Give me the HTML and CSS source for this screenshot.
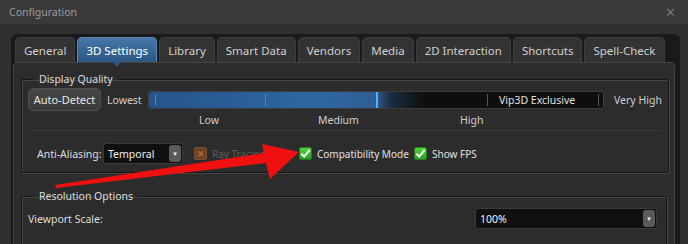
FILE: index.html
```html
<!DOCTYPE html>
<html lang="en">
<head>
  <meta charset="UTF-8" />
  <title>Configuration</title>
  <link rel="stylesheet" href="styles.css">
</head>
<body>
  <div class="titlebar">
    <span>Configuration</span>
    <span class="close">✕</span>
  </div>

  <div class="window">
    <div class="tabframe">
      <div class="tabs">
        <div class="tab">General</div>
        <div class="tab active">3D Settings</div>
        <div class="tab">Library</div>
        <div class="tab">Smart Data</div>
        <div class="tab">Vendors</div>
        <div class="tab">Media</div>
        <div class="tab">2D Interaction</div>
        <div class="tab">Shortcuts</div>
        <div class="tab">Spell-Check</div>
      </div>

      <div class="panel">
        <fieldset class="group quality">
          <legend>Display Quality</legend>

          <div class="quality-row">
            <button class="btn">Auto-Detect</button>
            <span class="edge-label lowest">Lowest</span>
            <div class="slider">
              <div class="slider-fill"></div>
              <span class="tick t1"></span>
              <span class="tick t2"></span>
              <span class="tick t3"></span>
              <span class="tick t4"></span>
              <span class="marker"></span>
              <span class="vip">Vip3D Exclusive</span>
            </div>
            <span class="edge-label highest">Very High</span>
          </div>

          <div class="level-labels">
            <span>Low</span>
            <span>Medium</span>
            <span>High</span>
          </div>

          <div class="options-row">
            <span class="label aa">Anti-Aliasing:</span>
            <div class="select small">
              <span>Temporal</span>
              <span class="drop">▼</span>
            </div>
            <span class="check disabled ray"><span class="box off">✕</span>Ray Tracing</span>
            <span class="check compat">
              <span class="box on"><svg width="11" height="11" viewBox="0 0 11 11"><path d="M1.5 5.8 L4.2 8.6 L9.6 2" fill="none" stroke="#fff" stroke-width="2"/></svg></span>Compatibility Mode
            </span>
            <span class="check">
              <span class="box on"><svg width="11" height="11" viewBox="0 0 11 11"><path d="M1.5 5.8 L4.2 8.6 L9.6 2" fill="none" stroke="#fff" stroke-width="2"/></svg></span>Show FPS
            </span>
          </div>
        </fieldset>

        <fieldset class="group resolution">
          <legend>Resolution Options</legend>
          <div class="res-row">
            <span class="label">Viewport Scale:</span>
            <div class="select wide">
              <span>100%</span>
              <span class="drop">▼</span>
            </div>
          </div>
        </fieldset>
      </div>
    </div>
  </div>

  <!-- red annotation arrow drawn over the dialog -->
  <svg class="arrow" width="688" height="244" viewBox="0 0 688 244">
    <polygon points="55,185 264,153 262,144 299,152 270,179 266,163 56,188" fill="#f01010"/>
  </svg>
</body>
</html>
```

FILE: styles.css
```css
* {
  box-sizing: border-box;
  margin: 0;
  padding: 0;
}

body {
  width: 688px;
  height: 244px;
  overflow: hidden;
  background-color: #303030;
  color: #dcdcdc;
  font-family: "Noto Sans", "Open Sans", sans-serif;
  font-size: 10.5px;
  position: relative;
}

.titlebar {
  height: 24px;
  background-color: #3a3a3a;
  color: #9a9a9a;
  font-size: 10.5px;
  display: flex;
  align-items: center;
  justify-content: space-between;
  padding: 0 12px 0 9px;
}

.titlebar .close {
  color: #777;
  font-size: 13px;
}

.window {
  padding: 10px 0 0 11px;
}

.tabframe {
  width: 669px;
  background-color: #1a1a1a;
  border-radius: 6px 6px 0 0;
  padding: 3px 3px 0 2px;
  height: 210px;
}

.tabs {
  display: flex;
  gap: 2px;
  padding-left: 2px;
}

.tab {
  height: 25px;
  padding: 0 8px;
  display: flex;
  align-items: center;
  background-color: #333;
  border: 1px solid #3e3e3e;
  border-bottom: none;
  border-radius: 5px 5px 0 0;
  color: #cfcfcf;
  font-size: 11.5px;
  position: relative;
}

.tab.active {
  background: linear-gradient(#4677a8, #2a5683);
  border-color: #5a88b6;
  color: #fff;
}

.tab.active::after {
  content: "";
  position: absolute;
  left: 50%;
  bottom: -5px;
  margin-left: -4px;
  border-left: 4px solid transparent;
  border-right: 4px solid transparent;
  border-top: 5px solid #2a5683;
}

.panel {
  width: 662px;
  height: 185px;
  background-color: #2c2c2c;
  border: 1px solid #454545;
  border-radius: 4px 4px 0 0;
  padding: 10px 7px 0 7px;
}

.group {
  border: 1px solid #171717;
  box-shadow: inset 1px 1px 0 #454545, 1px 1px 0 #454545;
  padding: 0 6px;
}

.group legend {
  margin-left: 6px;
  padding: 0 5px;
  color: #dcdcdc;
  font-size: 10.5px;
  line-height: 12px;
}

.quality {
  height: 100px;
}

.quality-row {
  display: flex;
  align-items: center;
  margin-top: 3px;
  white-space: nowrap;
}

.quality-row > * {
  flex-shrink: 0;
}

.btn {
  width: 73px;
  height: 23px;
  background: linear-gradient(#474747, #3b3b3b);
  border: 1px solid #505050;
  border-radius: 5px;
  color: #e6e6e6;
  font-family: inherit;
  font-size: 11px;
}

.edge-label {
  color: #cfcfcf;
}

.lowest {
  width: 47px;
  padding-left: 6px;
}

.highest {
  padding-left: 10px;
}

.slider {
  position: relative;
  width: 456px;
  height: 18px;
  background-color: #0e0e0e;
  border: 1px solid #3e3e3e;
  border-radius: 3px;
  overflow: hidden;
}

.slider-fill {
  height: 100%;
  width: 275px;
  background: linear-gradient(90deg, #24558a 0%, #2f66a0 60%, #2d5f94 82%, #1a2d42 88%, #0e0e0e 100%);
}

.tick {
  position: absolute;
  top: 2px;
  width: 1px;
  height: 12px;
  background-color: #6a7d92;
}

.t1 { left: 6px; }
.t2 { left: 116px; }
.t3 { left: 338px; background-color: #555; }
.t4 { left: 449px; background-color: #555; }

.marker {
  position: absolute;
  top: 0;
  left: 227px;
  width: 2px;
  height: 100%;
  background-color: #4cb4ff;
}

.vip {
  position: absolute;
  left: 350px;
  top: 0;
  line-height: 16px;
  color: #e0e0e0;
}

.level-labels {
  display: grid;
  grid-template-columns: 171px 119px 142px auto;
  margin-top: 2px;
  color: #cfcfcf;
}

.level-labels span:first-child {
  grid-column: 2;
}

.options-row {
  display: flex;
  align-items: center;
  border-top: 1px solid #3a3a3a;
  margin-top: 3px;
  padding: 12px 0 0 9px;
  white-space: nowrap;
}

.label {
  color: #dcdcdc;
}

.label.aa {
  width: 66px;
}

.select {
  display: flex;
  align-items: center;
  justify-content: space-between;
  background-color: #101010;
  border: 1px solid #3a3a3a;
  border-radius: 3px;
  color: #f0f0f0;
  padding: 0 1px 0 4px;
}

.select.small {
  width: 80px;
  height: 21px;
}

.select .drop {
  width: 12px;
  height: 17px;
  background-color: #5a5a5a;
  border-radius: 3px;
  color: #eee;
  font-size: 6px;
  display: flex;
  align-items: center;
  justify-content: center;
}

.check {
  display: flex;
  align-items: center;
  color: #e0e0e0;
  font-size: 10px;
}

.check.ray {
  margin-left: 11px;
  width: 105px;
}

.check.compat {
  width: 115px;
}

.box {
  width: 13px;
  height: 13px;
  border-radius: 2px;
  margin-right: 5px;
  display: flex;
  align-items: center;
  justify-content: center;
  font-size: 11px;
  font-weight: bold;
}

.box.on {
  background: linear-gradient(#4fd43a, #2d9f22);
  border: 1px solid #2a7a20;
}

.box.off {
  background-color: #6a4424;
  border: 1px solid #7a5030;
  color: #b46a3c;
  font-size: 9px;
}

.check.disabled {
  color: #5e5e5e;
}

.resolution {
  margin-top: 17px;
  height: 60px;
}

.res-row {
  display: flex;
  align-items: center;
  justify-content: space-between;
  margin-top: 6px;
  padding-right: 3px;
}

.select.wide {
  width: 182px;
  height: 21px;
}

.arrow {
  position: absolute;
  top: 0;
  left: 0;
  pointer-events: none;
}
```
